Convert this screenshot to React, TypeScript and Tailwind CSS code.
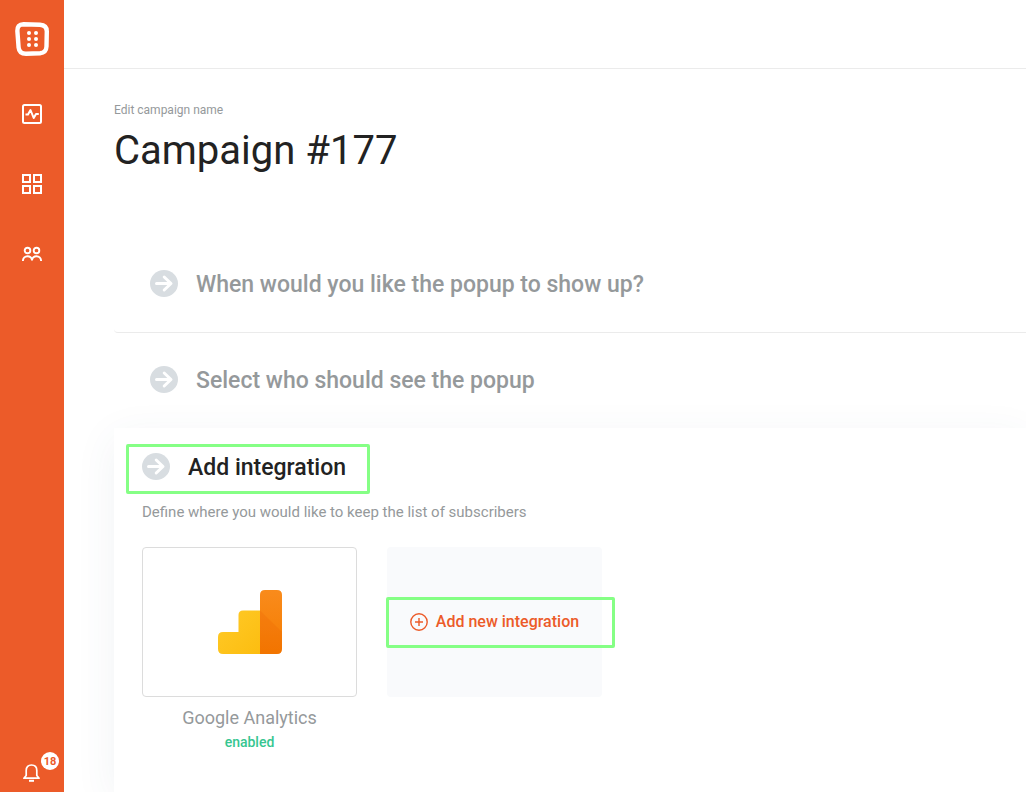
import type { ReactNode } from "react";

interface StepRowProps {
  title: string;
  divider?: boolean;
}

interface NavLinkProps {
  label: string;
  children: ReactNode;
}

const steps = [
  { title: "When would you like the popup to show up?", divider: true },
  { title: "Select who should see the popup", divider: false },
];

function LogoIcon() {
  return (
    <svg width="34" height="34" viewBox="0 0 34 34" fill="none">
      <path
        d="M8.5 2.2 L25 2.8 Q31.8 3.2 31.8 9.5 L31.5 24.5 Q31.2 30.8 25 31.2 L11 31.7 Q4.2 31.7 3.6 25.5 L2.4 9.5 Q2 2.2 8.5 2.2 Z"
        stroke="#fff"
        strokeWidth="4.4"
        strokeLinejoin="round"
      />
      <g fill="#fff">
        <circle cx="14" cy="11" r="2" />
        <circle cx="21" cy="11" r="2" />
        <circle cx="14" cy="17" r="2" />
        <circle cx="21" cy="17" r="2" />
        <circle cx="14" cy="23" r="2" />
        <circle cx="21" cy="23" r="2" />
      </g>
    </svg>
  );
}

function ActivityIcon() {
  return (
    <svg width="20" height="20" viewBox="0 0 20 20" fill="none" stroke="#fff" strokeWidth="2">
      <rect x="1" y="1" width="18" height="18" rx="1.5" />
      <path d="M3.5 10.5 H6 L8.5 6 L11.7 14 L14 10 H16.8" strokeLinejoin="round" />
    </svg>
  );
}

function GridIcon() {
  return (
    <svg width="20" height="20" viewBox="0 0 20 20" fill="none" stroke="#fff" strokeWidth="2">
      <rect x="1" y="1" width="7" height="7" />
      <rect x="12" y="1" width="7" height="7" />
      <rect x="1" y="12" width="7" height="7" />
      <rect x="12" y="12" width="7" height="7" />
    </svg>
  );
}

function PeopleIcon() {
  return (
    <svg width="20" height="20" viewBox="0 0 20 20" fill="none" stroke="#fff" strokeWidth="1.9">
      <circle cx="5.5" cy="6.5" r="2.8" />
      <circle cx="14.5" cy="6.5" r="2.8" />
      <path d="M0.9 17 C0.9 10.8 10 10.8 10 16.5 C10 10.8 19.1 10.8 19.1 17" />
    </svg>
  );
}

function BellIcon() {
  return (
    <svg width="18" height="18" viewBox="0 0 18 18" fill="none" stroke="#fff" strokeWidth="1.7">
      <path
        d="M3.2 11.5 V6.5 C3.2 3 5.3 1 8.5 1 C11.7 1 13.8 3 13.8 6.5 V11.5 L16.1 14.2 H0.9 Z"
        strokeLinejoin="round"
      />
      <path d="M6 16.8 H11" strokeWidth="2" />
    </svg>
  );
}

function ArrowBadge() {
  return (
    <svg width="28" height="27" viewBox="0 0 28 27" fill="none" className="shrink-0">
      <ellipse cx="14" cy="13.5" rx="14" ry="13.5" fill="#d8dde1" />
      <path
        d="M6.5 13.5 H20.5 M14.2 7 L21 13.5 L14.2 20"
        stroke="#fff"
        strokeWidth="3"
        strokeLinecap="round"
        strokeLinejoin="round"
      />
    </svg>
  );
}

function AnalyticsLogo() {
  return (
    <svg width="64" height="64" viewBox="0 0 64 64">
      <defs>
        <linearGradient id="bars" x1="0" y1="0" x2="1" y2="1">
          <stop offset="0" stopColor="#ffca28" />
          <stop offset="1" stopColor="#fcbd10" />
        </linearGradient>
        <linearGradient id="column" x1="0" y1="0" x2="0" y2="1">
          <stop offset="0" stopColor="#f98b1c" />
          <stop offset="1" stopColor="#f57c00" />
        </linearGradient>
      </defs>
      <path
        d="M42 20.5 H25 Q20.5 20.5 20.5 25 V42 H5 Q0 42 0 47 V59 Q0 64 5 64 H42 Z"
        fill="url(#bars)"
      />
      <path
        d="M47 0 H59 Q64 0 64 5 V59 Q64 64 59 64 H42 V5 Q42 0 47 0 Z"
        fill="url(#column)"
      />
      <path d="M42 20.5 L64 42 V59 Q64 64 59 64 H42 Z" fill="#e65100" opacity="0.16" />
    </svg>
  );
}

function NavLink({ label, children }: NavLinkProps) {
  return (
    <a href="#" aria-label={label} className="block">
      {children}
    </a>
  );
}

function StepRow({ title, divider }: StepRowProps) {
  return (
    <button
      type="button"
      className={`flex w-full items-start gap-[18px] pt-[33px] pb-8 pl-9 text-left ${
        divider ? "rounded-bl border-b border-[#ebebeb]" : ""
      }`}
    >
      <ArrowBadge />
      <span className="text-[23px] leading-[30px] font-medium text-[#95999b]">{title}</span>
    </button>
  );
}

export default function App() {
  return (
    <div className="flex min-h-screen overflow-hidden bg-white font-['Roboto',sans-serif] text-[#222]">
      {/* Sidebar */}
      <nav className="z-10 flex w-16 shrink-0 flex-col items-center bg-[#ec5b29] pt-[22px] pb-2.5">
        <NavLink label="Home">
          <LogoIcon />
        </NavLink>
        <div className="mt-12 flex flex-col gap-[50px]">
          <NavLink label="Activity">
            <ActivityIcon />
          </NavLink>
          <NavLink label="Dashboard">
            <GridIcon />
          </NavLink>
          <NavLink label="Audience">
            <PeopleIcon />
          </NavLink>
        </div>
        <button type="button" aria-label="Notifications" className="relative mt-auto">
          <BellIcon />
          <span className="absolute -top-3 left-[18px] size-[18px] rounded-full bg-white text-center text-[11px] leading-5 font-bold text-[#ec5b29]">
            18
          </span>
        </button>
      </nav>

      <div className="flex min-w-0 flex-1 flex-col">
        <header className="h-[69px] shrink-0 border-b border-[#ebebeb]" />

        <main className="flex flex-1 flex-col pt-8 pl-[50px]">
          <label htmlFor="campaign" className="text-xs leading-[18px] text-[#95999b]">
            Edit campaign name
          </label>
          <input
            id="campaign"
            type="text"
            defaultValue="Campaign #177"
            className="h-[62px] w-full text-[40px] text-[#222] outline-none"
          />

          <div className="mt-14">
            {steps.map((step) => (
              <StepRow key={step.title} title={step.title} divider={step.divider} />
            ))}
          </div>

          {/* Open step */}
          <section className="relative flex-1 bg-white px-7 pt-[25px] shadow-[0_10px_40px_rgba(50,80,120,0.07)]">
            <div className="pointer-events-none absolute top-4 left-3 h-[50px] w-[244px] rounded-xs border-3 border-[#85ff85]" />
            <div className="flex items-start gap-[18px]">
              <ArrowBadge />
              <h2 className="text-[23px] leading-[30px] font-medium">Add integration</h2>
            </div>
            <p className="mt-4 text-[15px] leading-[26px] text-[#95999b]">
              Define where you would like to keep the list of subscribers
            </p>

            <div className="mt-[22px] flex gap-[30px]">
              <div className="w-[215px] text-center">
                <div className="flex h-[150px] items-center justify-center rounded border border-[#dcdcdc]">
                  <AnalyticsLogo />
                </div>
                <h3 className="mt-2 text-lg leading-[26px] text-[#95999b]">Google Analytics</h3>
                <p className="text-sm leading-[22px] font-medium text-[#36c690]">enabled</p>
              </div>

              <div className="relative h-[150px] w-[215px]">
                <button
                  type="button"
                  className="flex size-full items-center justify-center gap-2 rounded bg-[#f9fafc] font-medium text-[#ec5b29]"
                >
                  <svg width="18" height="18" viewBox="0 0 18 18" fill="none" stroke="#ec5b29" strokeWidth="1.4">
                    <circle cx="9" cy="9" r="8.2" />
                    <path d="M9 5 V13 M5 9 H13" />
                  </svg>
                  Add new integration
                </button>
                <div className="pointer-events-none absolute top-[50px] -left-px h-[51px] w-[229px] rounded-xs border-3 border-[#85ff85]" />
              </div>
            </div>
          </section>
        </main>
      </div>
    </div>
  );
}
